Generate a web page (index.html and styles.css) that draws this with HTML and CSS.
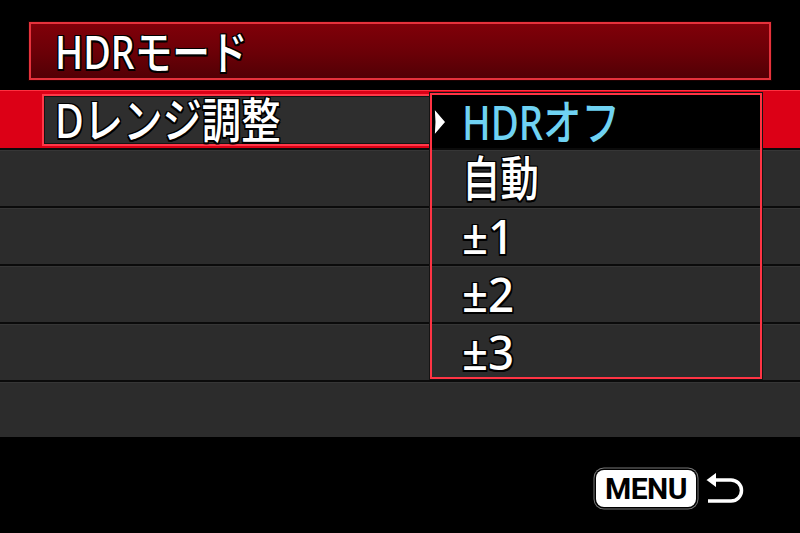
FILE: index.html
```html
<!DOCTYPE html>
<html lang="ja">
<head>
<meta charset="utf-8">
<link rel="stylesheet" href="styles.css">
</head>
<body>
<div class="screen">
  <div class="title"><span class="txt">HDRモード</span></div>
  <div class="list">
    <div class="row row-sel">
      <div class="label"><span class="txt">Dレンジ調整</span></div>
    </div>
    <div class="row"></div>
    <div class="row"></div>
    <div class="row"></div>
    <div class="row"></div>
    <div class="row row-last"></div>
    <div class="dropdown">
      <div class="opt opt-sel">
        <svg class="pointer" width="18" height="34" viewBox="0 0 18 34"><path d="M3 3 L15 17 L3 31 Q4.5 17 3 3 Z" fill="#fff" stroke="#000" stroke-width="1.5" stroke-linejoin="round"/></svg>
        <span class="txt cyan">HDRオフ</span>
      </div>
      <div class="opt"><span class="txt">自動</span></div>
      <div class="opt"><span class="txt num">±1</span></div>
      <div class="opt"><span class="txt num">±2</span></div>
      <div class="opt"><span class="txt num">±3</span></div>
    </div>
  </div>
  <div class="footer">
    <div class="menu-btn">MENU</div>
    <svg class="back" width="42" height="38" viewBox="0 0 42 38">
      <g fill="none" stroke-linejoin="round">
        <path d="M13 11 H27 A10.5 10.5 0 0 1 27 32 H4" stroke="#000" stroke-width="7"/>
        <polygon points="1,11 13,2 13,20" fill="#fff" stroke="#000" stroke-width="2"/>
        <path d="M12 11 H27 A10.5 10.5 0 0 1 27 32 H4" stroke="#fff" stroke-width="3.5"/>
      </g>
    </svg>
  </div>
</div>
</body>
</html>
```
FILE: styles.css
```css
html, body {
  margin: 0;
  padding: 0;
  background: #000;
}
.screen {
  width: 800px;
  height: 533px;
  overflow: hidden;
  padding-top: 22px;
  box-sizing: border-box;
  font-family: "Noto Sans", "Noto Sans CJK JP", sans-serif;
  color: #fff;
}
.txt {
  display: inline-block;
  font-family: "Noto Sans", "Noto Sans CJK JP", sans-serif;
  font-size: 48px;
  font-weight: 500;
  line-height: 1;
  transform: scaleX(0.8);
  transform-origin: left center;
  text-shadow: 1.5px 0 0 #000, -1.5px 0 0 #000, 0 1.5px 0 #000, 0 -1.5px 0 #000,
    1.5px 1.5px 0 #000, -1.5px -1.5px 0 #000, 1.5px -1.5px 0 #000, -1.5px 1.5px 0 #000;
}
.title {
  margin-left: 29px;
  width: 742px;
  height: 58px;
  box-sizing: border-box;
  border: 2px solid #e5323c;
  box-shadow: 0 0 0 1px #1a0000;
  background: linear-gradient(#800009, #6a0007 55%, #520005);
  display: flex;
  align-items: center;
  padding-left: 24px;
}
.title .txt {
  font-size: 46px;
  transform: scaleX(0.82);
}
.list {
  position: relative;
  margin-top: 10px;
}
.row {
  height: 58px;
  box-sizing: border-box;
  background: #2c2c2c;
  border-top: 2px solid #0b0b0b;
  box-shadow: inset 0 1px 0 #363636;
}
.row-last {
  height: 57px;
}
.row-sel {
  background: #dc0016;
  border-top: 0;
  box-shadow: inset 0 1px 0 #ff3040;
  padding: 4px 0 0 42px;
}
.label {
  width: 390px;
  height: 52px;
  box-sizing: border-box;
  border: 2px solid #ff3848;
  border-right: 0;
  background: #2e2e2e;
  box-shadow: inset 0 0 0 1px #141414;
  display: flex;
  align-items: center;
  padding-left: 11px;
}
.label .txt {
  transform: scaleX(0.82);
}
.dropdown {
  position: absolute;
  left: 430px;
  top: 3px;
  width: 332px;
  height: 286px;
  box-sizing: border-box;
  border: 2px solid #ff3444;
  box-shadow: 0 0 0 1px #151515, inset 0 0 0 1px #151515;
  overflow: hidden;
}
.opt {
  height: 58px;
  box-sizing: border-box;
  background: #2c2c2c;
  border-top: 2px solid #0b0b0b;
  box-shadow: inset 0 1px 0 #363636;
  display: flex;
  align-items: center;
  padding-left: 30px;
  position: relative;
}
.opt-sel {
  height: 53px;
  border-top: 0;
  margin-left: -2px;
  padding-left: 32px;
  background: #000;
  box-shadow: none;
}
.pointer {
  position: absolute;
  left: 1px;
  top: 10px;
}
.cyan {
  color: #6fd2f2;
}
.num {
  transform: scaleX(0.95);
}
.footer {
  display: flex;
  justify-content: flex-end;
  align-items: center;
  padding-top: 32px;
  padding-right: 54px;
  gap: 8px;
}
.menu-btn {
  width: 100px;
  height: 37px;
  box-sizing: border-box;
  background: #fff;
  color: #000;
  border-radius: 8px;
  box-shadow: 0 0 0 1.5px #000, 0 0 0 2.5px #777;
  font-family: Roboto, "Liberation Sans", sans-serif;
  font-weight: 700;
  font-size: 30px;
  line-height: 37px;
  text-align: center;
  letter-spacing: -0.5px;
}
.back {
  display: block;
}
```
